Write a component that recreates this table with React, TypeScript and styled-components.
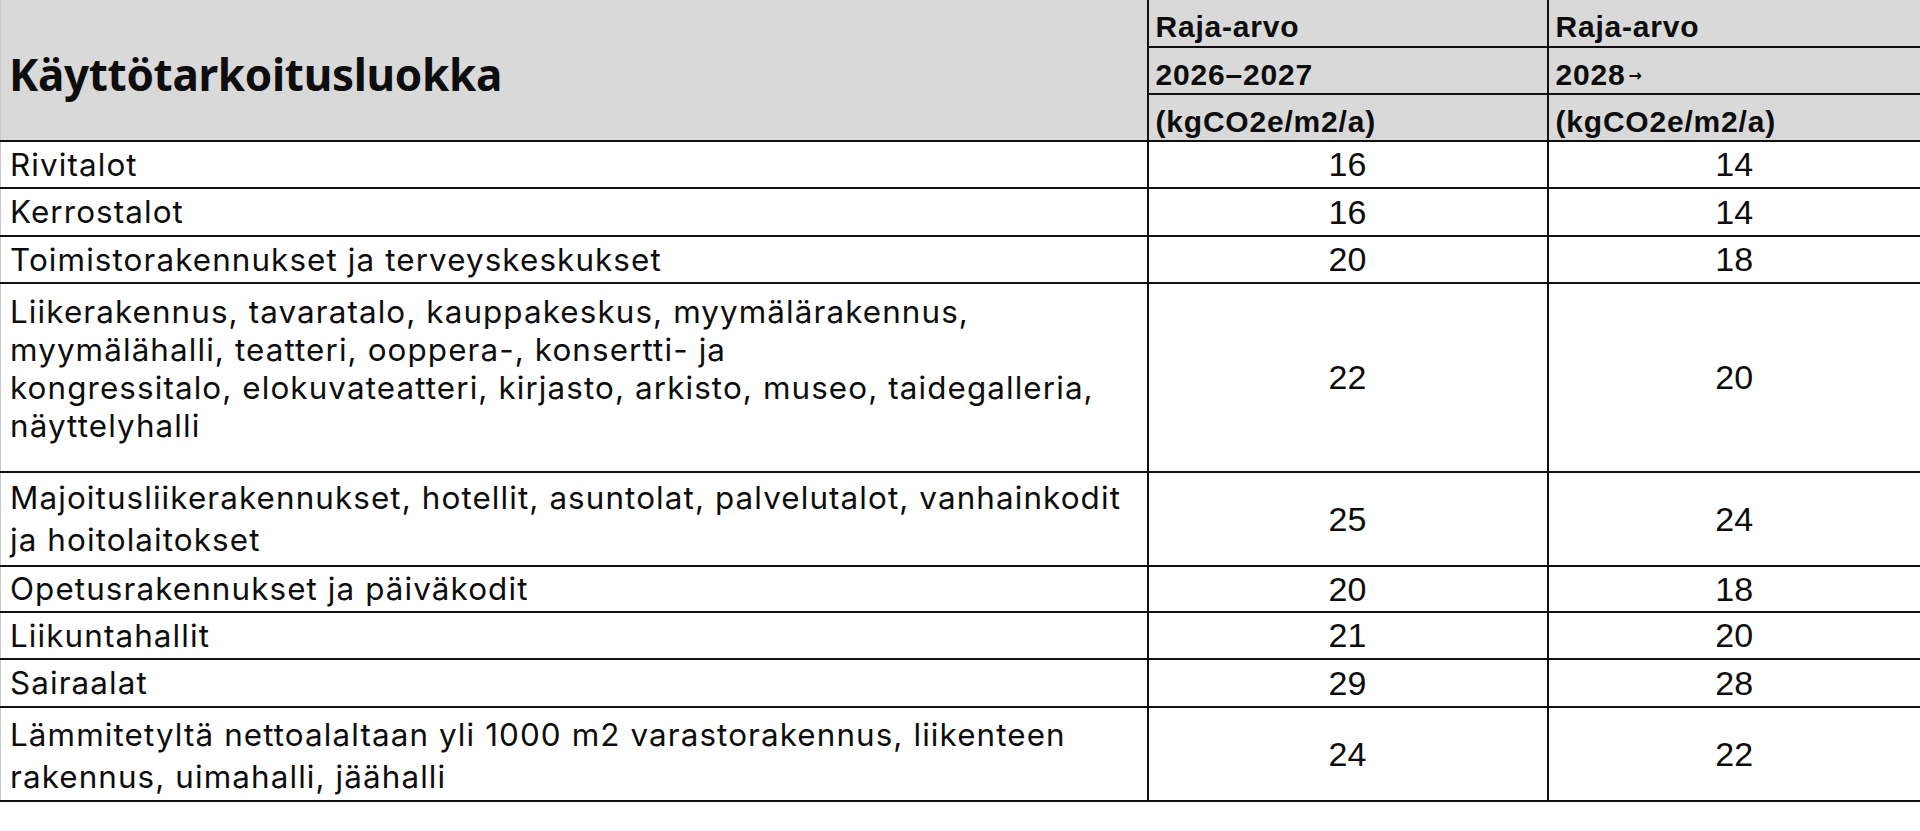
import styled, { createGlobalStyle } from 'styled-components'

const GlobalStyle = createGlobalStyle`
  html, body {
    margin: 0;
    padding: 0;
    background: #ffffff;
  }
`

const Page = styled.div`
  width: 1920px;
  height: 831px;
  overflow: hidden;
  background: #ffffff;
`

const Table = styled.table`
  width: 1920px;
  table-layout: fixed;
  border-collapse: collapse;
  color: #0d0d0d;
  border-left: 1px solid #c8c8c8;
`

const HeadRow = styled.tr`
  height: 47px;
  background: #d9d9d9;
`

const TitleCell = styled.th`
  padding: 8px 0 0 8px;
  text-align: left;
  vertical-align: middle;
  font-family: 'Noto Sans', 'Open Sans', sans-serif;
  font-size: 44px;
  font-weight: 700;
  letter-spacing: -0.3px;
  border-bottom: 2px solid #111;
`

const HeadCell = styled.th`
  padding: 8px 0 0 7px;
  text-align: left;
  vertical-align: middle;
  font-family: 'Liberation Sans Narrow', 'Liberation Sans', Arial, sans-serif;
  font-size: 30px;
  font-weight: 700;
  letter-spacing: 0.8px;
  white-space: nowrap;
  border-left: 2px solid #111;
  border-bottom: 2px solid #111;
`

const Arrow = styled.span`
  font-family: 'DejaVu Sans', sans-serif;
  font-size: 16px;
  font-weight: 700;
  margin-left: 3px;
  vertical-align: 4px;
`

const BodyRow = styled.tr<{ $height: number }>`
  height: ${(p) => p.$height}px;
`

const NameCell = styled.td<{ $top: number; $lift: number; $leading: number }>`
  padding: ${(p) => p.$top}px 10px ${(p) => p.$lift}px 9px;
  vertical-align: middle;
  font-family: Inter, 'Noto Sans', sans-serif;
  font-size: 31.4px;
  letter-spacing: 1.1px;
  line-height: ${(p) => p.$leading}px;
  white-space: nowrap;
  border-bottom: 2px solid #111;
`

const ValueCell = styled.td`
  padding: 0;
  text-align: center;
  vertical-align: middle;
  font-family: 'Liberation Sans', Arial, sans-serif;
  font-size: 34px;
  border-left: 2px solid #111;
  border-bottom: 2px solid #111;
`

type Row = { lines: string[]; a: number; b: number; h: number; top?: number; lift?: number }

const rows: Row[] = [
  { lines: ['Rivitalot'], a: 16, b: 14, h: 47 },
  { lines: ['Kerrostalot'], a: 16, b: 14, h: 48 },
  { lines: ['Toimistorakennukset ja terveyskeskukset'], a: 20, b: 18, h: 47 },
  {
    lines: [
      'Liikerakennus, tavaratalo, kauppakeskus, myymälärakennus,',
      'myymälähalli, teatteri, ooppera-, konsertti- ja',
      'kongressitalo, elokuvateatteri, kirjasto, arkisto, museo, taidegalleria,',
      'näyttelyhalli',
    ],
    a: 22,
    b: 20,
    h: 189,
    lift: 18,
  },
  {
    lines: ['Majoitusliikerakennukset, hotellit, asuntolat, palvelutalot, vanhainkodit', 'ja hoitolaitokset'],
    a: 25,
    b: 24,
    h: 94,
  },
  { lines: ['Opetusrakennukset ja päiväkodit'], a: 20, b: 18, h: 46 },
  { lines: ['Liikuntahallit'], a: 21, b: 20, h: 47 },
  { lines: ['Sairaalat'], a: 29, b: 28, h: 48 },
  {
    lines: ['Lämmitetyltä nettoalaltaan yli 1000 m2 varastorakennus, liikenteen', 'rakennus, uimahalli, jäähalli'],
    a: 24,
    b: 22,
    h: 94,
    top: 4,
  },
]

export default function App() {
  return (
    <Page>
      <GlobalStyle />
      <Table>
        <colgroup>
          <col style={{ width: 1147 }} />
          <col style={{ width: 400 }} />
          <col />
        </colgroup>
        <thead>
          <HeadRow>
            <TitleCell rowSpan={3}>Käyttötarkoitusluokka</TitleCell>
            <HeadCell>Raja-arvo</HeadCell>
            <HeadCell>Raja-arvo</HeadCell>
          </HeadRow>
          <HeadRow>
            <HeadCell>2026–2027</HeadCell>
            <HeadCell>
              2028<Arrow>→</Arrow>
            </HeadCell>
          </HeadRow>
          <HeadRow>
            <HeadCell>(kgCO2e/m2/a)</HeadCell>
            <HeadCell>(kgCO2e/m2/a)</HeadCell>
          </HeadRow>
        </thead>
        <tbody>
          {rows.map((r) => (
            <BodyRow key={r.lines[0]} $height={r.h}>
              <NameCell
                $top={r.top ?? 0}
                $lift={r.lift ?? 0}
                $leading={r.lines.length === 2 ? 42 : 38}
              >
                {r.lines.map((line, i) => (
                  <span key={line}>
                    {i > 0 && <br />}
                    {line}
                  </span>
                ))}
              </NameCell>
              <ValueCell>{r.a}</ValueCell>
              <ValueCell>{r.b}</ValueCell>
            </BodyRow>
          ))}
        </tbody>
      </Table>
    </Page>
  )
}
